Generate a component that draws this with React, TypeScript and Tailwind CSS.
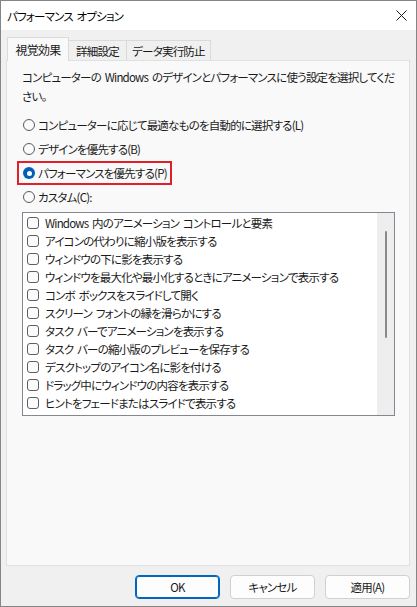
const options = [
  "Windows 内のアニメーション コントロールと要素",
  "アイコンの代わりに縮小版を表示する",
  "ウィンドウの下に影を表示する",
  "ウィンドウを最大化や最小化するときにアニメーションで表示する",
  "コンボ ボックスをスライドして開く",
  "スクリーン フォントの縁を滑らかにする",
  "タスク バーでアニメーションを表示する",
  "タスク バーの縮小版のプレビューを保存する",
  "デスクトップのアイコン名に影を付ける",
  "ドラッグ中にウィンドウの内容を表示する",
  "ヒントをフェードまたはスライドで表示する",
]

const radios = [
  "コンピューターに応じて最適なものを自動的に選択する(L)",
  "デザインを優先する(B)",
  "パフォーマンスを優先する(P)",
  "カスタム(C):",
]

function Radio({ checked }: { checked?: boolean }) {
  if (checked) {
    return (
      <span className="w-[12px] h-[12px] rounded-full bg-[#005fb8] flex items-center justify-center shrink-0">
        <span className="w-[5px] h-[5px] rounded-full bg-white" />
      </span>
    )
  }
  return <span className="w-[12px] h-[12px] rounded-full border border-[#5a5a5a] bg-[#fbfbfb] shrink-0" />
}

export default function App() {
  return (
    <div className="w-[417px] h-[607px] border border-[#858585] bg-[#f0f0f0] flex flex-col text-[11.5px] leading-[18px] tracking-[-0.8px] [word-spacing:2px] whitespace-nowrap text-[#1a1a1a] font-['Noto_Sans_CJK_JP','Noto_Sans',sans-serif] [font-feature-settings:'palt']">
      {/* title bar */}
      <div className="h-[29px] bg-white flex items-center justify-between pl-[6px] pr-[8px] shrink-0">
        <span className="text-black">パフォーマンス オプション</span>
        <svg width="11" height="11" viewBox="0 0 11 11" className="mr-[1px]">
          <path d="M0.5 0.5 L10.5 10.5 M10.5 0.5 L0.5 10.5" stroke="#1a1a1a" strokeWidth="1" />
        </svg>
      </div>

      {/* tabs */}
      <div className="mt-[7px] ml-[6px] h-[23px] flex items-end shrink-0">
        <div className="relative z-10 -mb-px w-[62px] h-[24px] bg-[#f9f9f9] border-x border-t border-[#dadada] flex items-center justify-center text-[12px]">
          視覚効果
        </div>
        <div className="w-[58px] h-[20px] bg-[#f0f0f0] border-t border-r border-[#dadada] flex items-center justify-center">
          詳細設定
        </div>
        <div className="w-[84px] h-[20px] bg-[#f0f0f0] border-t border-r border-[#dadada] flex items-center justify-center">
          データ実行防止
        </div>
      </div>

      {/* panel */}
      <div className="ml-[5px] w-[404px] h-[506px] border border-[#e0e0e0] bg-[#f9f9f9] pt-[7px] pl-[15px] shrink-0">
        <p className="leading-[19px]">
          コンピューターの Windows のデザインとパフォーマンスに使う設定を選択してくだ
          <br />
          さい。
        </p>

        <div className="mt-[7px] flex flex-col">
          {radios.map((label, i) =>
            i === 2 ? (
              <div key={i} className="h-[24px] flex items-center">
                <div className="-ml-[5px] w-[155px] h-[24px] border-2 border-[#e3202a] flex items-center pl-[4px]">
                  <Radio checked />
                  <span className="ml-[3px]">{label}</span>
                </div>
              </div>
            ) : (
              <div key={i} className="h-[24px] flex items-center pl-[1px]">
                <Radio />
                <span className="ml-[3px]">{label}</span>
              </div>
            )
          )}
        </div>

        {/* list box */}
        <div className="mt-[3px] w-[373px] h-[204px] border border-[#828790] bg-white flex">
          <div className="flex-1 overflow-hidden pt-[1px] pl-[4px]">
            {options.map((label, i) => (
              <div key={i} className="h-[18px] flex items-center">
                <span className="w-[12px] h-[12px] rounded-[3px] border border-[#5f5f5f] bg-[#fbfbfb] shrink-0" />
                <span className="ml-[6px]">{label}</span>
              </div>
            ))}
          </div>
          <div className="w-[17px] bg-[#eeeeee] pt-[18px] flex justify-center">
            <div className="w-[2px] h-[107px] bg-[#8a8a8a] rounded-full" />
          </div>
        </div>
      </div>

      {/* buttons */}
      <div className="mt-[9px] pr-[6px] flex justify-end gap-[10px]">
        <button className="w-[85px] h-[24px] rounded-[4px] bg-[#fdfdfd] border border-[#0067c0] shadow-[inset_0_0_0_1px_#0067c0]">
          OK
        </button>
        <button className="w-[85px] h-[24px] rounded-[4px] bg-[#fdfdfd] border border-[#d0d0d0]">
          キャンセル
        </button>
        <button className="w-[85px] h-[24px] rounded-[4px] bg-[#fdfdfd] border border-[#d0d0d0]">
          適用(A)
        </button>
      </div>
    </div>
  )
}
